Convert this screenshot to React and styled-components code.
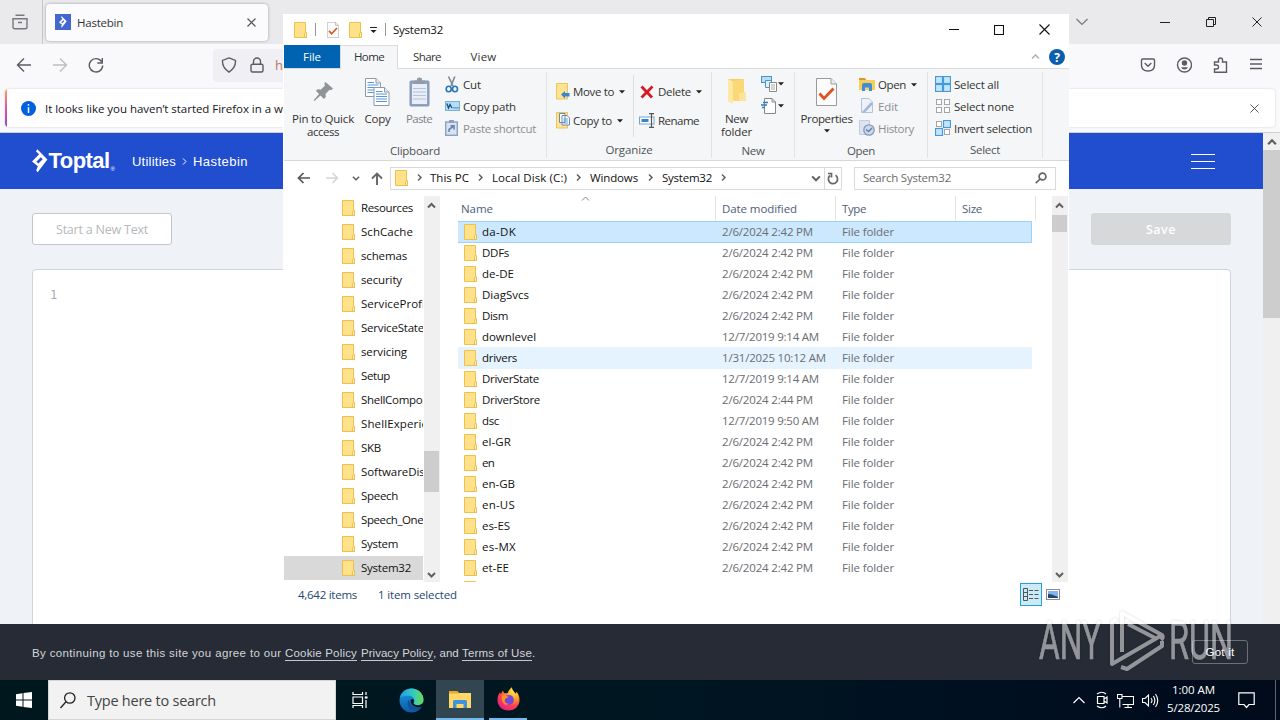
import React, { useLayoutEffect, useRef } from "react";
import styled, { createGlobalStyle, css } from "styled-components";

const GlobalStyle = createGlobalStyle`
  * { box-sizing: border-box; }
  body { margin: 0; overflow: hidden; font-family: "Open Sans", "Noto Sans", sans-serif; font-size: 11.5px; color: #111; }
  svg { display: block; flex: none; }
`;

const TextBox = styled.span`
  display: block;
  flex: none;
  width: ${(p) => p.$w}px;
  white-space: pre;
  overflow: visible;
`;

/* Tracks a label so that it fills exactly the given width. */
function Label({ w, children, className }) {
  const ref = useRef(null);
  useLayoutEffect(() => {
    const el = ref.current;
    el.style.letterSpacing = "0px";
    const natural = el.getBoundingClientRect().width;
    el.style.letterSpacing = `${(w - natural) / el.textContent.length}px`;
  }, [w, children]);
  return (
    <TextBox $w={w} className={className}>
      <span ref={ref}>{children}</span>
    </TextBox>
  );
}

const RaisedLabel = styled(Label)`padding-bottom: 2px;`;

const Desktop = styled.div`
  position: relative;
  width: 1280px;
  height: 720px;
  overflow: hidden;
  display: flex;
  flex-direction: column;
  background: #fff;
`;

/* ---------- icons ---------- */

const FolderIcon = ({ w = 13, h = 16 }) => (
  <svg width={w} height={h} viewBox="0 0 13 16">
    <path d="M.5 .5H11.500V10.500H12.500V15.500H.5Z" fill="#ffe086" stroke="#eec04d" />
    <path d="M1 1H11V15H1Z" fill="#ffe189" />
    <path d="M10.500 15.500V11.500q1-1.500 2 0V15.500Z" fill="#fff0b8" stroke="#e5b83c" strokeWidth=".8" />
  </svg>
);

const Stroke = ({ w = 16, h = w, d, c = "#5b5b66", s = 1.4, children }) => (
  <svg width={w} height={h} viewBox={`0 0 ${w} ${h}`} fill="none" stroke={c} strokeWidth={s}>
    {d && <path d={d} />}
    {children}
  </svg>
);

const Chevron = ({ dir = "down", c = "#606060", s = 2, w = 9 }) => {
  const paths = { down: "M1 3L4.500 6.500L8 3", up: "M1 6.500L4.500 3L8 6.500", right: "M3 1.500L6 4.500L3 7.500" };
  return (
    <svg width={w} height={w} viewBox="0 0 9 9" fill="none" stroke={c} strokeWidth={s}>
      <path d={paths[dir]} />
    </svg>
  );
};

const Triangle = () => (
  <svg width="6" height="4" viewBox="0 0 6 4"><path d="M0 .3H6L3 3.500Z" fill="#222" /></svg>
);

const CloseX = ({ size = 10, c = "#333", s = 1.1 }) => (
  <Stroke w={size} c={c} s={s} d={`M.5 .5L${size - 0.5} ${size - 0.5}M${size - 0.5} .5L.5 ${size - 0.5}`} />
);

const PropsDoc = ({ w, h }) => (
  <svg width={w} height={h} viewBox="0 0 21 28">
    <path d="M.5 .5H15L20.500 6V27.500H.5Z" fill="#fcfcfc" stroke="#9b9b9b" />
    <path d="M15 .5V6H20.500" fill="#eee" stroke="#9b9b9b" />
    <path d="M3.500 15.500L8 20.500L17.500 10.500" fill="none" stroke="#e0531f" strokeWidth="2.800" />
  </svg>
);

const PinIcon = () => (
  <svg width="21" height="21" viewBox="0 0 21 21" fill="#8d9599">
    <path d="M12.500 1L20 7.500L18 9.300L16.500 8.800L12.500 13L12.800 16L11 18L7.500 14.500L1.500 20L.7 19.300L6 13L2.800 9.800L4.800 8.200L8 8.600L12 4.500L11.300 2.400Z" />
  </svg>
);

const Page = ({ x, y }) => (
  <g transform={`translate(${x} ${y})`}>
    <path d="M.5 .5H11L15.500 5V18.500H.5Z" fill="#fff" stroke="#8f9aa8" />
    <path d="M11 .5V5H15.500" fill="#e8eef5" stroke="#8f9aa8" />
    <path d="M2.500 4.500H9M2.500 7H13.500M2.500 9.500H13.500M2.500 12H13.500M2.500 14.500H13.500" stroke="#5596dd" />
  </g>
);

const CopyIcon = () => (
  <svg width="25" height="28" viewBox="0 0 25 28"><Page x={0} y={0} /><Page x={8.5} y={9} /></svg>
);

const PasteIcon = () => (
  <svg width="21" height="30" viewBox="0 0 21 30">
    <rect x="1" y="4" width="19" height="25" rx="1" fill="#8da2c4" stroke="#8397b8" />
    <rect x="3" y="7" width="15" height="20" fill="#e9edf7" />
    <path d="M4 11.500H17M4 15H17M4 18.500H17M4 22H17" stroke="#b4c2dc" />
    <path d="M5 3.500H8V1.500Q10.500 -.5 13 1.500V3.500H16V7H5Z" fill="#929ba8" />
  </svg>
);

const CutIcon = () => (
  <svg width="14" height="17" viewBox="0 0 14 17" fill="none">
    <path d="M3.500 .5L8 10M9.800 .5L6 10" stroke="#808a94" strokeWidth="1.600" />
    <ellipse cx="3.700" cy="13" rx="2.500" ry="2.700" stroke="#2476bd" strokeWidth="1.600" />
    <ellipse cx="10" cy="13" rx="2.500" ry="2.700" stroke="#2476bd" strokeWidth="1.600" />
  </svg>
);

const CopyPathIcon = () => (
  <svg width="15" height="10" viewBox="0 0 15 10">
    <rect x=".5" y=".5" width="14" height="9" fill="#b5dcf8" stroke="#79afd6" />
    <path d="M1.800 2.500L3.500 7L5 3.500L7 7M8.500 6.800h1M10.500 6.800h1M12.500 6.800h1" fill="none" stroke="#184e7c" strokeWidth="1.300" />
  </svg>
);

const PasteShortcutIcon = () => (
  <svg width="13" height="16" viewBox="0 0 13 16">
    <rect x=".7" y="2" width="11.600" height="13.300" fill="#d9e2f1" stroke="#8ca0bf" strokeWidth="1.400" />
    <rect x="4" y="0" width="5" height="3" fill="#8ca0bf" />
    <path d="M4 12V9.500L8 6.500M5.500 5.800H9V9.500" fill="none" stroke="#6783b0" strokeWidth="1.600" />
  </svg>
);

const MoveToIcon = () => (
  <svg width="14" height="17" viewBox="0 0 14 17">
    <path d="M.5 .5H11.500V16H.5Z" fill="#ffe391" stroke="#ecc55b" />
    <path d="M5 11.500L9 8V10H13.500V13.500H9V15.500Z" fill="#3b86c8" />
  </svg>
);

const CopyToIcon = () => (
  <svg width="14" height="17" viewBox="0 0 14 17">
    <path d="M.5 .5H11.500V16H.5Z" fill="#ffe391" stroke="#ecc55b" />
    <path d="M3.500 1.500H9V10.500H3.500ZM6 3.500H11L13.500 6V13H6Z" fill="#fff" stroke="#668bb3" />
    <path d="M7.500 7H12M7.500 9H12M7.500 11H12" stroke="#5596dd" strokeWidth=".9" />
  </svg>
);

const RenameIcon = () => (
  <svg width="16" height="15" viewBox="0 0 16 15" fill="none">
    <rect x=".5" y="4" width="14.500" height="7" fill="#fff" stroke="#72a7d4" />
    <rect x="2.500" y="6" width="7" height="3" fill="#3585c7" />
    <path d="M12.500 1V14M10 .7H15M10 14.300H15" stroke="#555" strokeWidth="1.200" />
  </svg>
);

const NewFolderIcon = () => (
  <svg width="19" height="27" viewBox="0 0 19 27">
    <path d="M1 1H17V14H18.500V23H1Z" fill="#f8cf67" />
    <path d="M1 1L6 3.500V26L1 23.500Z" fill="#ffe8a3" />
    <path d="M6 3.500L17 1V14L12 15V23H6Z" fill="#fbd777" />
    <path d="M12 15L18.500 14V23H12Z" fill="#fce49b" />
  </svg>
);

const NewItemIcon = () => (
  <svg width="16" height="16" viewBox="0 0 16 16" fill="#fff">
    <rect x=".5" y=".5" width="10" height="6" fill="#b8dcf5" stroke="#4c95cb" />
    <path d="M4.500 4.500H10.500V11.500H4.500Z" fill="#dff0fb" stroke="#4c95cb" />
    <path d="M8.500 6.500H15.500V15.500H8.500Z" stroke="#888" />
    <path d="M10 9H14M10 11H14M10 13H14" stroke="#aaa" />
  </svg>
);

const EasyAccessIcon = () => (
  <svg width="16" height="16" viewBox="0 0 16 16" fill="#fff">
    <path d="M3.500 .5H11L14.500 4V15.500H3.500Z" stroke="#888" />
    <path d="M11 .5V4H14.500" fill="none" stroke="#888" />
    <path d="M2 4.500H7M0 7H6M1 9.500H4" stroke="#2d7cc0" strokeWidth="1.400" />
  </svg>
);

const OpenIcon = () => (
  <svg width="16" height="15" viewBox="0 0 16 15">
    <path d="M0 1H6L7.500 3H16V13H0Z" fill="#f9cf53" />
    <path d="M0 1H6L7 3H0Z" fill="#d89b29" />
    <path d="M3 14V8Q3 6 5 6H11Q13 6 13 8V14H10V10.500H6V14Z" fill="#3b8dde" />
  </svg>
);

const EditIcon = () => (
  <svg width="16" height="16" viewBox="0 0 16 16" fill="none">
    <path d="M2.500 .5H10L13.500 4V14.500H2.500Z" fill="#edf2fa" stroke="#b3c3dc" />
    <path d="M3 14L12 4L14 6L5.500 15Z" fill="#a4b8d8" />
  </svg>
);

const HistoryIcon = () => (
  <svg width="16" height="16" viewBox="0 0 16 16" fill="none">
    <path d="M.5 .5H10.500V14.500H.5Z" fill="#dde4f0" stroke="#c0cde1" />
    <circle cx="10" cy="10" r="5.200" fill="#ccd8ea" stroke="#8298bc" strokeWidth="1.300" />
    <path d="M7 9.500L9.500 11.500L13 8" stroke="#6480ad" strokeWidth="1.400" />
  </svg>
);

const GridIcon = ({ picked }) => (
  <svg width="16" height="16" viewBox="0 0 16 16">
    {[[0, 0], [8, 0], [0, 8], [8, 8]].map(([x, y], i) => {
      const on = picked[i];
      const inset = on ? 0.5 : 1.5;
      return (
        <rect key={i} x={x + inset} y={y + inset} width={on ? 7 : 5} height={on ? 7 : 5}
          fill={on ? "#c5e5fb" : "#fff"} stroke={on ? "#439bdd" : "#a6a6a6"} strokeWidth={on ? 1.2 : 1} />
      );
    })}
  </svg>
);

const ToptalMark = ({ size = 24 }) => (
  <svg width={size * 0.65} height={size} viewBox="0 0 16 24">
    <path fillRule="evenodd" fill="#fff" d="M5.500 0L15.800 10.500L5.800 23.500L4.300 21.800L6 17.500L0 12.500L7.300 5.200L4 2ZM9 8.200L4.500 12.700L6.500 14.500L11 10.300Z" />
  </svg>
);

/* ---------- browser ---------- */

const Browser = styled.main`
  height: 680px;
  display: flex;
  flex-direction: column;
  background: #f9f9fb;
`;

const TabStrip = styled.header`
  height: 44px;
  display: flex;
  align-items: center;
  background: #eaeaed;
  color: #333;
`;

const ArchiveCell = styled.div`
  width: 43px;
  height: 44px;
  padding-left: 12px;
  display: flex;
  align-items: center;
  border-right: 1px solid #c5c5ca;
`;

const Tab = styled.div`
  width: 222px;
  height: 37px;
  margin: 0 0 0 3px;
  padding: 0 12px 0 9px;
  display: flex;
  align-items: center;
  gap: 6px;
  border-radius: 4px;
  background: #fbfbfd;
  box-shadow: 0 0 3px #999;
`;

const Favicon = styled.i`
  width: 16px;
  height: 16px;
  display: grid;
  place-items: center;
  background: #4466cf;
`;

const Spring = styled.div`flex: 1;`;

const WindowButtons = styled.div`
  display: flex;
  align-items: center;
  padding-right: 18px;
  gap: 36px;
`;

const Toolbar = styled.nav`
  height: 42px;
  display: flex;
  align-items: center;
  padding: 0 16px;
`;

const NavButtons = styled.div`
  width: 197px;
  display: flex;
  gap: 20px;
`;

const UrlField = styled.div`
  width: 800px;
  height: 33px;
  padding-left: 8px;
  display: flex;
  align-items: center;
  gap: 12px;
  border-radius: 4px;
  background: #f0f0f4;
  color: #b07b67;
  font-size: 13px;
`;

const Address = styled.span`margin-left: -2px;`;

const ToolIcons = styled.div`
  display: flex;
  gap: 20px;
`;

const Notice = styled.div`
  height: 38px;
  margin: 3px 5px 5px;
  padding: 0 16px 0 0;
  display: flex;
  align-items: center;
  border-radius: 4px;
  background: #fff;
  box-shadow: 0 0 2px #c9c9cd;
  overflow: hidden;
  color: #15141a;
`;

const NoticeAccent = styled.i`
  width: 2px;
  height: 38px;
  margin-right: 14px;
  background: linear-gradient(#ffa15e, #d457a5 50%, #8f4ad6);
`;

const InfoDot = styled.i`
  width: 15px;
  height: 15px;
  margin-right: 9px;
  display: grid;
  place-items: center;
  border-radius: 50%;
  background: #0061e0;
`;

const Viewport = styled.div`
  height: 492px;
  display: flex;
  border-top: 1px solid #cfcfd3;
`;

const PageBody = styled.section`
  width: 1263px;
  background: #eff2f6;
  overflow: hidden;
`;

const PageHeader = styled.header`
  height: 56px;
  padding: 0 48px 0 32px;
  display: flex;
  align-items: center;
  background: #204ecf;
  color: #fff;
  font-family: "Liberation Sans", sans-serif;
  font-size: 13px;
`;

const Brand = styled.div`
  display: flex;
  align-items: center;
  width: 100px;
  gap: 1px;
  font: 700 22px "Liberation Sans", sans-serif;
  sup { font-size: 6px; font-weight: 400; align-self: flex-end; line-height: 10px; }
`;

const Crumb = styled.div`
  display: flex;
  align-items: center;
  gap: 4px;
`;

const Burger = styled.div`
  width: 24px;
  height: 15px;
  border: solid #fff;
  border-width: 1px 0;
  display: flex;
  align-items: center;
  &::after { content: ""; width: 100%; height: 1px; background: #fff; }
`;

const PageActions = styled.div`
  padding: 24px 32px;
  display: flex;
  justify-content: space-between;
`;

const PageButton = styled.div`
  width: 140px;
  height: 32px;
  display: grid;
  place-items: center;
  border-radius: 3px;
  font: 12.5px "Open Sans", sans-serif;
  ${(p) => p.$solid
    ? css`background: #d6d8da; color: #fff; font-weight: 600; `
    : css`background: #fff; border: 1px solid #c4c6c9; color: #b6b8bb;`}
`;

const Editor = styled.div`
  width: 1199px;
  height: 360px;
  margin-left: 32px;
  padding: 17px;
  border: 1px solid #ced4dc;
  border-radius: 4px;
  background: #fff;
  color: #aaa;
  font: 12px/17px "DejaVu Sans Mono", monospace;
`;

const Bar = styled.div`
  width: ${(p) => p.$w ?? 16}px;
  height: 100%;
  margin-left: ${(p) => p.$gap ?? 0}px;
  flex: none;
  background: #f0f0f0;
  display: flex;
  flex-direction: column;
  align-items: flex-start;
`;

const BarArrow = styled.div`
  width: ${(p) => p.$w ?? 15}px;
  height: ${(p) => p.$h ?? 18}px;
  display: grid;
  place-items: center;
`;

const Thumb = styled.div`
  width: ${(p) => p.$w ?? 15}px;
  height: ${(p) => p.$h}px;
  margin-top: ${(p) => p.$gap ?? 0}px;
  background: #cdcdcd;
`;

const CookieBar = styled.footer`
  height: 56px;
  padding: 2px 32px 0;
  display: flex;
  align-items: center;
  background: #262b35;
  color: #d3d5d9;
  font: 11.5px "Liberation Sans", sans-serif;
  line-height: 14px;
`;

const CookieLink = styled(Label)`
  border-bottom: 1px solid #c5c7cc;
  margin-top: 1px;
`;

const GotIt = styled.div`
  width: 56px;
  height: 24px;
  margin-top: -2px;
  display: grid;
  place-items: center;
  border: 1px solid #6b6f77;
  border-radius: 3px;
  color: #fff;
`;

function BrowserWindow() {
  return (
    <Browser>
      <TabStrip>
        <ArchiveCell>
          <Stroke d="M3.500 1.200H12.500M1 4.700H15V13Q15 14.800 13.200 14.800H2.800Q1 14.800 1 13ZM6 8.500H10" c="#77777f" />
        </ArchiveCell>
        <Tab>
          <Favicon><ToptalMark size={12} /></Favicon>
          <Label w={46}>Hastebin</Label>
          <Spring />
          <CloseX size={9} c="#555" />
        </Tab>
        <Spring />
        <WindowButtons>
          <Stroke w={12} h={8} c="#777" s={1.2} d="M.5 1L6 6.500L11.500 1" />
          <Spring />
          <Stroke w={10} c="#222" s={1} d="M0 5.500H10" />
          <Stroke w={10} c="#222" s={1} d="M.5 2.500H7.500V9.500H.5ZM2.500 2.500V.5H9.500V7.500H7.500" />
          <CloseX size={10} c="#222" s={1} />
        </WindowButtons>
      </TabStrip>
      <Toolbar>
        <NavButtons>
          <Stroke d="M15 8H1.500M8 1.500L1.500 8L8 14.500" />
          <Stroke c="#bcbcc2" d="M1 8H14.500M8 1.500L14.500 8L8 14.500" />
          <Stroke d="M13.500 4.500A6.700 6.700 0 1 0 14.700 8.500M14.300 1V6H9.300" />
        </NavButtons>
        <UrlField>
          <Stroke d="M8 .9L14.500 3.400Q15 10.500 8 15.200Q1 10.500 1.500 3.400Z" />
          <Stroke d="M3.500 7.200H12.500Q14 7.200 14 8.700V13.500Q14 15 12.500 15H3.500Q2 15 2 13.500V8.700Q2 7.200 3.500 7.200ZM4.500 7V4.500a3.500 3.500 0 0 1 7 0V7" />
          <Address>hastebin.com</Address>
        </UrlField>
        <Spring />
        <ToolIcons>
          <Stroke d="M2.800 2H13.200Q14.500 2 14.500 3.300V8Q14.500 14 8 14Q1.500 14 1.500 8V3.300Q1.500 2 2.800 2ZM4.700 6L8 9.200L11.300 6" />
          <Stroke>
            <circle cx="8.500" cy="8" r="7" />
            <circle cx="8.500" cy="6" r="2" fill="#5b5b66" />
            <path d="M5 10.200H12Q11 12.500 8.500 12.500Q6 12.500 5 10.200Z" fill="#5b5b66" stroke="none" />
          </Stroke>
          <Stroke d="M2.500 5H6.500V3a2 2 0 0 1 4 0V5H14.500V15.200H2.500V12H4.500a2 2 0 0 0 0-4H2.500Z" />
          <Stroke d="M2 2.500H14M2 7H14M2 11.500H14" />
        </ToolIcons>
      </Toolbar>
      <Notice>
        <NoticeAccent />
        <InfoDot><Stroke w={3} h={9} c="#fff" s={1.5} d="M1.500 0V1.800M1.500 3.300V9" /></InfoDot>
        <Label w={260}>It looks like you haven’t started Firefox in a while.</Label>
        <Spring />
        <CloseX size={9} c="#555" s={1} />
      </Notice>
      <Viewport>
        <PageBody>
          <PageHeader>
            <Brand><ToptalMark /><Label w={61}>Toptal</Label><sup>®</sup></Brand>
            <Crumb>
              <Label w={44}>Utilities</Label>
              <Chevron dir="right" c="#fff" s={1} w={9} />
              <Label w={55}>Hastebin</Label>
            </Crumb>
            <Spring />
            <Burger />
          </PageHeader>
          <PageActions>
            <PageButton><Label w={92}>Start a New Text</Label></PageButton>
            <PageButton $solid><Label w={30}>Save</Label></PageButton>
          </PageActions>
          <Editor>1</Editor>
        </PageBody>
        <Bar $w={17}>
          <BarArrow $h={17} $w={17}><Chevron dir="up" w={10} /></BarArrow>
          <Thumb $h={168} $w={17} />
        </Bar>
      </Viewport>
      <CookieBar>
        <Label w={253}>By continuing to use this site you agree to our </Label>
        <CookieLink w={72}>Cookie Policy</CookieLink>
        <Label w={4}> </Label>
        <CookieLink w={72}>Privacy Policy</CookieLink>
        <Label w={29}>, and </Label>
        <CookieLink w={70}>Terms of Use</CookieLink>
        <span>.</span>
        <Spring />
        <GotIt><Label w={29}>Got it</Label></GotIt>
      </CookieBar>
    </Browser>
  );
}

/* ---------- file explorer ---------- */

const Window = styled.section`
  position: absolute;
  left: 283px;
  top: 14px;
  width: 786px;
  height: 610px;
  padding-left: 1px;
  display: flex;
  flex-direction: column;
  background: #fff;
`;

const TitleBar = styled.header`
  height: 31px;
  padding: 0 19px 0 10px;
  display: flex;
  align-items: center;
`;

const QuickItem = styled.div`
  width: ${(p) => p.$w}px;
  display: flex;
  flex: none;
`;

const ArrowBox = styled(QuickItem)`padding: 1px 0 0 5px;`;

const CaptionButtons = styled.div`
  display: flex;
  align-items: center;
  gap: 35px;
`;

const RibbonTabs = styled.nav`
  height: 24px;
  padding-right: 4px;
  display: flex;
  align-items: stretch;
  border-bottom: 1px solid #dadbdc;
  color: #333;
  & > svg { align-self: center; }
`;

const RibbonTab = styled.div`
  width: ${(p) => p.$w}px;
  display: flex;
  align-items: center;
  justify-content: center;
  ${(p) => p.$file && css`background: #0063b1; color: #fff;`}
  ${(p) => p.$active && css`background: #f5f6f7; border: 1px solid #dadbdc; border-bottom: 0; margin-bottom: -1px; padding-bottom: 2px;`}
`;

const Help = styled.i`
  width: 16px;
  height: 16px;
  margin-left: 9px;
  align-self: center;
  display: grid;
  place-items: center;
  border-radius: 50%;
  background: #0c5fae;
  color: #fff;
  font: 700 12px "Open Sans", sans-serif;
`;

const Ribbon = styled.div`
  height: 92px;
  display: flex;
  padding: 3px 0 2px;
  background: #f5f6f7;
  border-bottom: 1px solid #d6d8da;
`;

const Group = styled.section`
  width: ${(p) => p.$w}px;
  display: flex;
  flex-direction: column;
  align-items: center;
  border-right: 1px solid #e1e3e5;
  color: #333;
`;

const GroupBody = styled.div`
  width: 100%;
  height: 70px;
  padding-left: ${(p) => p.$pad ?? 0}px;
  display: flex;
`;

const GroupName = styled(Label)`
  color: #4e5358;
  line-height: 17px;
`;

const BigButton = styled.div`
  width: ${(p) => p.$w}px;
  height: 70px;
  display: flex;
  flex-direction: column;
  align-items: center;
  line-height: 13px;
  color: ${(p) => (p.$off ? "#808488" : "#333")};
`;

const IconSlot = styled.div`
  height: 40px;
  padding-bottom: 1px;
  display: flex;
  align-items: center;
`;

const ArrowSlot = styled.div`padding-top: 4px;`;

const CommandList = styled.div`
  width: ${(p) => p.$w}px;
  height: ${(p) => (p.$two ? 66 : 67)}px;
  padding: ${(p) => (p.$two ? "5px 0 3px" : "1px 0 0")};
  display: flex;
  flex-direction: column;
  justify-content: space-around;
`;

const Command = styled.div`
  height: ${(p) => p.$h ?? 22}px;
  display: flex;
  align-items: center;
  color: ${(p) => (p.$off ? "#8a8e92" : "#333")};
`;

const CommandIcon = styled.div`
  width: ${(p) => p.$w}px;
  display: flex;
  flex: none;
`;

const Rule = styled.i`
  width: 1px;
  height: 62px;
  margin: 3px 5px 0 0;
  background: #dcdee0;
`;

const Cmd = ({ icon, text, w, slot = 18, off, arrow, h }) => (
  <Command $off={off} $h={h}>
    <CommandIcon $w={slot}>{icon}</CommandIcon>
    {text && <Label w={w}>{text}</Label>}
    {arrow && (text ? <ArrowBox $w={arrow + 5}><Triangle /></ArrowBox> : <QuickItem $w={arrow}><Triangle /></QuickItem>)}
  </Command>
);

const Indent = styled.div`padding-left: ${(p) => p.$by}px;`;

const AddressRow = styled.div`
  height: 35px;
  padding: 0 13px 1px 13px;
  display: flex;
  align-items: center;
`;

const Path = styled.div`
  width: 452px;
  height: 23px;
  display: flex;
  align-items: center;
  padding-left: 4px;
  border: 1px solid #d9d9d9;
  color: #111;
`;

const Sep = styled.div`
  width: ${(p) => p.$w ?? 23}px;
  padding-bottom: 1px;
  display: grid;
  place-items: center;
`;

const Refresh = styled.div`
  width: 17px;
  height: 21px;
  margin-left: 3px;
  display: grid;
  place-items: center;
  border-left: 1px solid #d9d9d9;
`;

const SearchBox = styled.div`
  width: 202px;
  height: 23px;
  margin-left: 12px;
  padding: 0 8px;
  display: flex;
  align-items: center;
  justify-content: space-between;
  border: 1px solid #d9d9d9;
  color: #6b6b6b;
`;

const Panes = styled.div`
  height: 386px;
  display: flex;
`;

const Tree = styled.div`
  width: 139px;
  overflow: hidden;
`;

const TreeItem = styled.div`
  height: 24px;
  padding-left: 58px;
  display: flex;
  align-items: center;
  gap: 6px;
  background: ${(p) => (p.$selected ? "#d9d9d9" : "transparent")};
`;

const Files = styled.div`
  width: 594px;
  margin-left: 18px;
  overflow: hidden;
`;

const Columns = styled.div`
  height: 25px;
  display: flex;
  color: #4c607a;
`;

const Column = styled.div`
  width: ${(p) => p.$w}px;
  padding: 0 0 0 ${(p) => p.$pad ?? 6}px;
  display: flex;
  align-items: center;
  border-right: 1px solid #e5e5e5;
`;

const SortMark = styled.div`
  align-self: flex-start;
  margin: -2px 0 0 88px;
`;

const FileRow = styled.div`
  width: 574px;
  height: 22px;
  margin-bottom: -1px;
  padding-left: 6px;
  display: flex;
  align-items: center;
  color: #6a6d71;
  border: 1px solid transparent;
  border-left-width: 0;
  ${(p) => p.$state === "selected" && css`background: #cce8ff; border-color: #99d1ff;`}
  ${(p) => p.$state === "hover" && css`background: #e5f3ff;`}
`;

const FileName = styled.div`
  width: 258px;
  display: flex;
  align-items: center;
  gap: 5px;
  color: #111;
`;

const DateCell = styled.div`width: 120px;`;

const StatusBar = styled.footer`
  height: 25px;
  padding: 0 9px 0 14px;
  display: flex;
  align-items: center;
  color: #24476f;
`;

const ItemCount = styled(Label)`margin-right: 21px;`;

const ViewToggle = styled.div`
  width: 22px;
  height: 23px;
  margin-right: 4px;
  display: grid;
  place-items: center;
  border: 1px solid #26a0da;
  background: #cbeaf8;
`;

const TREE = [
  ["Resources", 52], ["SchCache", 52], ["schemas", 46], ["security", 41], ["ServiceProfiles", 79], ["ServiceState", 63],
  ["servicing", 46], ["Setup", 29], ["ShellComponents", 90], ["ShellExperiences", 92], ["SKB", 20],
  ["SoftwareDistribution", 110], ["Speech", 37], ["Speech_OneCore", 86], ["System", 37], ["System32", 50],
];

const D24 = ["2/6/2024 2:42 PM", 91];
const FILES = [
  ["da-DK", 34, D24, "selected"], ["DDFs", 27, D24], ["de-DE", 32, D24], ["DiagSvcs", 47, D24], ["Dism", 26, D24],
  ["downlevel", 54, ["12/7/2019 9:14 AM", 97]], ["drivers", 35, ["1/31/2025 10:12 AM", 104], "hover"],
  ["DriverState", 57, ["12/7/2019 9:14 AM", 97]], ["DriverStore", 58, ["2/6/2024 2:44 PM", 91]],
  ["dsc", 17, ["12/7/2019 9:50 AM", 97]], ["el-GR", 29, D24], ["en", 12, D24], ["en-GB", 33, D24], ["en-US", 33, D24],
  ["es-ES", 28, D24], ["es-MX", 34, D24], ["et-EE", 27, D24], ["F12", 18, D24],
];

function Explorer() {
  return (
    <Window>
      <TitleBar>
        <QuickItem $w={21}><FolderIcon w={13} h={16} /></QuickItem>
        <QuickItem $w={12}><Stroke w={1} h={13} c="#999" s={1} d="M.5 0V13" /></QuickItem>
        <QuickItem $w={22}><PropsDoc w={12} h={16} /></QuickItem>
        <QuickItem $w={21}><FolderIcon w={13} h={16} /></QuickItem>
        <QuickItem $w={15}>
          <svg width="7" height="7" viewBox="0 0 7 7"><path d="M0 1H7V2H0ZM.5 4H6.500L3.500 7Z" fill="#222" /></svg>
        </QuickItem>
        <QuickItem $w={8}><Stroke w={1} h={13} c="#999" s={1} d="M.5 0V13" /></QuickItem>
        <Label w={50}>System32</Label>
        <Spring />
        <CaptionButtons>
          <Stroke w={11} c="#111" s={1} d="M1 5.500H11" />
          <Stroke w={10} c="#111" s={1.1} d="M.5 .5H9.500V9.500H.5Z" />
          <CloseX size={11} c="#111" />
        </CaptionButtons>
      </TitleBar>
      <RibbonTabs>
        <RibbonTab $w={56} $file><Label w={18}>File</Label></RibbonTab>
        <RibbonTab $w={58} $active><Label w={30}>Home</Label></RibbonTab>
        <RibbonTab $w={58}><Label w={28}>Share</Label></RibbonTab>
        <RibbonTab $w={55}><Label w={26}>View</Label></RibbonTab>
        <Spring />
        <Chevron dir="up" c="#aaa" s={1.3} />
        <Help>?</Help>
      </RibbonTabs>
      <Ribbon>
        <Group $w={263}>
          <GroupBody>
            <BigButton $w={78}>
              <IconSlot><PinIcon /></IconSlot>
              <Label w={62}>Pin to Quick</Label>
              <Label w={32}>access</Label>
            </BigButton>
            <BigButton $w={31}><IconSlot><CopyIcon /></IconSlot><Label w={26}>Copy</Label></BigButton>
            <BigButton $w={52} $off><IconSlot><PasteIcon /></IconSlot><Label w={26}>Paste</Label></BigButton>
            <CommandList $w={100}>
              <Cmd icon={<CutIcon />} text="Cut" w={18} slot={18} />
              <Cmd icon={<CopyPathIcon />} text="Copy path" w={53} slot={18} />
              <Cmd icon={<PasteShortcutIcon />} text="Paste shortcut" w={73} slot={18} off />
            </CommandList>
          </GroupBody>
          <GroupName w={50}>Clipboard</GroupName>
        </Group>
        <Group $w={165}>
          <GroupBody $pad={9}>
            <CommandList $w={77} $two>
              <Cmd icon={<MoveToIcon />} text="Move to" w={41} slot={17} arrow={8} h={29} />
              <Cmd icon={<CopyToIcon />} text="Copy to" w={39} slot={17} arrow={8} h={29} />
            </CommandList>
            <Rule />
            <CommandList $w={70} $two>
              <Cmd
                icon={<Indent $by={1}><Stroke w={14} h={14} c="#d71920" s={2.8} d="M1.500 1.500L12 12.500M12.500 1.500L1.500 12.500" /></Indent>}
                text="Delete" w={33} slot={19} arrow={8} h={29}
              />
              <Cmd icon={<RenameIcon />} text="Rename" w={41} slot={19} h={29} />
            </CommandList>
          </GroupBody>
          <GroupName w={47}>Organize</GroupName>
        </Group>
        <Group $w={83}>
          <GroupBody $pad={9}>
            <BigButton $w={31}>
              <IconSlot><NewFolderIcon /></IconSlot>
              <Label w={23}>New</Label>
              <Label w={31}>folder</Label>
            </BigButton>
            <CommandList $w={40}>
              <Cmd icon={<Indent $by={9}><NewItemIcon /></Indent>} slot={26} arrow={8} />
              <Cmd icon={<Indent $by={9}><EasyAccessIcon /></Indent>} slot={26} arrow={8} />
              <Cmd icon={null} />
            </CommandList>
          </GroupBody>
          <GroupName w={23}>New</GroupName>
        </Group>
        <Group $w={133}>
          <GroupBody $pad={5}>
            <BigButton $w={53}>
              <IconSlot><PropsDoc w={21} h={28} /></IconSlot>
              <Label w={52}>Properties</Label>
              <ArrowSlot><Triangle /></ArrowSlot>
            </BigButton>
            <CommandList $w={70}>
              <Cmd icon={<Indent $by={6}><OpenIcon /></Indent>} text="Open" w={28} slot={25} arrow={8} />
              <Cmd icon={<Indent $by={6}><EditIcon /></Indent>} text="Edit" w={20} slot={25} off />
              <Cmd icon={<Indent $by={6}><HistoryIcon /></Indent>} text="History" w={36} slot={25} off />
            </CommandList>
          </GroupBody>
          <GroupName w={28}>Open</GroupName>
        </Group>
        <Group $w={115}>
          <GroupBody $pad={7}>
            <CommandList $w={100}>
              <Cmd icon={<GridIcon picked={[1, 1, 1, 1]} />} text="Select all" w={45} slot={19} />
              <Cmd icon={<GridIcon picked={[0, 0, 0, 0]} />} text="Select none" w={60} slot={19} />
              <Cmd icon={<GridIcon picked={[0, 1, 1, 0]} />} text="Invert selection" w={78} slot={19} />
            </CommandList>
          </GroupBody>
          <GroupName w={30}>Select</GroupName>
        </Group>
      </Ribbon>
      <AddressRow>
        <QuickItem $w={29}><Stroke w={13} h={12} c="#555" s={1.7} d="M13 6H1.500M6.500 1L1.500 6L6.500 11" /></QuickItem>
        <QuickItem $w={26}><Stroke w={13} h={12} c="#d4d4d4" s={1.5} d="M0 6H11.500M6.500 1L11.500 6L6.500 11" /></QuickItem>
        <QuickItem $w={19}><Chevron w={8} s={1.7} /></QuickItem>
        <QuickItem $w={19}><Stroke w={12} h={13} c="#666" s={1.9} d="M6 13V1.500M1 6.500L6 1.500L11 6.500" /></QuickItem>
        <Path>
          <FolderIcon />
          <Sep $w={22}><Chevron dir="right" s={1.5} /></Sep>
          <RaisedLabel w={39}>This PC</RaisedLabel>
          <Sep><Chevron dir="right" s={1.5} /></Sep>
          <RaisedLabel w={75}>Local Disk (C:)</RaisedLabel>
          <Sep><Chevron dir="right" s={1.5} /></Sep>
          <RaisedLabel w={48}>Windows</RaisedLabel>
          <Sep $w={24}><Chevron dir="right" s={1.5} /></Sep>
          <RaisedLabel w={50}>System32</RaisedLabel>
          <Sep><Chevron dir="right" s={1.5} /></Sep>
          <Spring />
          <Chevron w={10} s={1.8} />
          <Refresh><Stroke w={12} h={13} c="#666" s={1.7} d="M3 3.500A4.600 4.600 0 1 0 8.500 3.200M1 1.500H4.500V5.500" /></Refresh>
        </Path>
        <SearchBox>
          <RaisedLabel w={88}>Search System32</RaisedLabel>
          <Stroke w={12} h={12} c="#666" s={1.7}><circle cx="7.500" cy="4.500" r="3.400" /><path d="M5 7L.8 11.200" /></Stroke>
        </SearchBox>
      </AddressRow>
      <Panes>
        <Tree>
          {TREE.map(([name, w], i) => (
            <TreeItem key={name} $selected={i === 15}><FolderIcon /><RaisedLabel w={w}>{name}</RaisedLabel></TreeItem>
          ))}
        </Tree>
        <Bar $w={16} $gap={1}>
          <BarArrow><Chevron dir="up" /></BarArrow>
          <Thumb $h={41} $gap={237} />
          <Spring />
          <BarArrow $h={16}><Chevron /></BarArrow>
        </Bar>
        <Files>
          <Columns>
            <Column $w={258} $pad={3}>
              <Label w={32}>Name</Label>
              <SortMark><Chevron dir="up" c="#888" s={1} /></SortMark>
            </Column>
            <Column $w={120}><Label w={75}>Date modified</Label></Column>
            <Column $w={120}><Label w={24}>Type</Label></Column>
            <Column $w={80}><Label w={20}>Size</Label></Column>
          </Columns>
          {FILES.map(([name, w, [date, dw], state]) => (
            <FileRow key={name} $state={state}>
              <FileName><FolderIcon /><RaisedLabel w={w}>{name}</RaisedLabel></FileName>
              <DateCell><RaisedLabel w={dw}>{date}</RaisedLabel></DateCell>
              <RaisedLabel w={52}>File folder</RaisedLabel>
            </FileRow>
          ))}
        </Files>
        <Bar>
          <BarArrow><Chevron dir="up" /></BarArrow>
          <Thumb $h={17} $gap={1} />
          <Spring />
          <BarArrow $h={16}><Chevron /></BarArrow>
        </Bar>
      </Panes>
      <StatusBar>
        <ItemCount w={59}>4,642 items</ItemCount>
        <Label w={79}>1 item selected</Label>
        <Spring />
        <ViewToggle>
          <Stroke w={16} h={13} c="#555" s={1} d="M.5 .5H4.500V12.500H.5ZM.5 4.500H4.500M.5 8.500H4.500M6 2.500H10M11.500 2.500H15.500M6 6.500H10M11.500 6.500H15.500M6 10.500H10M11.500 10.500H15.500" />
        </ViewToggle>
        <svg width="14" height="11" viewBox="0 0 14 11">
          <rect x=".5" y=".5" width="13" height="10" fill="#fff" stroke="#8a8a94" />
          <rect x="2" y="2" width="10" height="7" fill="#83b5e8" />
          <path d="M2 5L6 5.500L12 8V9H2Z" fill="#22476a" />
        </svg>
      </StatusBar>
    </Window>
  );
}

/* ---------- watermark ---------- */

const Watermark = styled.svg`
  position: absolute;
  left: 1036px;
  top: 606px;
  filter: drop-shadow(0 0 1px rgba(0, 0, 0, 0.35));
`;

const AnyRun = () => (
  <Watermark width="200" height="70" viewBox="0 0 200 70" opacity=".5">
    <g fill="#fff" stroke="#fff" strokeWidth=".7" fontFamily="Roboto, sans-serif" fontWeight="400" fontSize="53">
      <text x="3" y="53" textLength="62" lengthAdjust="spacingAndGlyphs">ANY</text>
      <text x="133" y="53" textLength="64" lengthAdjust="spacingAndGlyphs">RUN</text>
    </g>
    <g fill="none" stroke="#fff" strokeWidth="4" strokeLinejoin="round">
      <path d="M81 13L76 16V58L126 29" />
      <path d="M86 46V7L126 29Q128 31 125 34M126 35V40L91 63L85 61" />
      <path d="M92 18L119 32" />
    </g>
  </Watermark>
);

/* ---------- taskbar ---------- */

const TaskbarRoot = styled.footer`
  height: 40px;
  display: flex;
  align-items: center;
  background: linear-gradient(90deg, #00171e, #001722 50%, #000f20 80%, #000a1b);
  color: #fff;
`;

const TaskButton = styled.div`
  width: 48px;
  height: 40px;
  margin-left: ${(p) => p.$gap ?? 0}px;
  display: grid;
  place-items: center;
  background: ${(p) => (p.$active ? "#314650" : "transparent")};
  border-bottom: ${(p) => (p.$open ? "2px solid #76b9ed" : "0")};
`;

const FirefoxButton = styled(TaskButton)`width: 38px;`;

const TaskSearch = styled.div`
  width: 288px;
  height: 40px;
  padding-left: 11px;
  display: flex;
  align-items: center;
  gap: 11px;
  background: #f2f2f2;
  border: 1px solid #d5d5d5;
  color: #444;
  font-size: 14.5px;
`;

const Tray = styled.div`
  display: flex;
  align-items: center;
  gap: 8px;
`;

const Clock = styled.div`
  width: 53px;
  display: flex;
  flex-direction: column;
  align-items: center;
  line-height: 18px;
  margin-bottom: 3px;
`;

const NotifySlot = styled.div`padding-left: 10px;`;

const ShowDesktop = styled.i`
  width: 5px;
  height: 40px;
  margin-left: 20px;
  border-left: 1px solid #60666f;
`;

const Taskbar = () => (
  <TaskbarRoot>
    <TaskButton>
      <svg width="16" height="16" viewBox="0 0 16 16" fill="#fff">
        <path d="M0 2.200L6.500 1.300V7.500H0ZM7.500 1.100L16 0V7.500H7.500ZM0 8.500H6.500V14.700L0 13.800ZM7.500 8.500H16V16L7.500 14.900Z" />
      </svg>
    </TaskButton>
    <TaskSearch>
      <Stroke w={16} h={17} c="#222" s={1.3}><circle cx="9.800" cy="6" r="5.200" /><path d="M6 9.800L.5 16" /></Stroke>
      <Label w={129}>Type here to search</Label>
    </TaskSearch>
    <TaskButton>
      <Stroke w={16} h={16} c="#fff" s={1.2} d="M1 0V2.500H10.500V0M1 5H10.500V11.500H1ZM1 16V13.500H10.500V16M14 0V3M14 8V16">
        <path d="M12.800 5.500H15.500" strokeWidth="2.200" />
      </Stroke>
    </TaskButton>
    <TaskButton $gap={3}>
      <svg width="25" height="25" viewBox="0 0 24 24">
        <defs>
          <linearGradient id="eg" x1="0" x2="1"><stop offset="0" stopColor="#1d9ee8" /><stop offset=".55" stopColor="#35c9c0" /><stop offset="1" stopColor="#6edb52" /></linearGradient>
          <linearGradient id="eb" x2="0" y2="1"><stop stopColor="#1b9de2" /><stop offset="1" stopColor="#0b59a8" /></linearGradient>
        </defs>
        <circle cx="12" cy="12" r="11.500" fill="url(#eb)" />
        <path d="M1 9.500C2 4 6.500 .5 12 .5C18.500 .5 23.500 5.500 23.500 11C23.500 14.500 21 16.500 17.800 16.500C15.500 16.500 14 15.500 14.200 14.300C15.500 13 15.300 8.500 10 7.500C6 7 2.500 8 1 9.500Z" fill="url(#eg)" />
        <path d="M9.500 11C6.500 14 9 21.500 15 21.500C18 21.500 20.500 20 21.800 18C16 20.200 10 16.500 9.500 11Z" fill="#174f92" />
        <path d="M14.300 13.200C13 15 15 16.500 17.800 16.500C20 16.500 22 15.600 23.200 13.800L24 18L21.800 18C17 20 11 16.500 11 12C12.500 9 15 11 14.300 13.200Z" fill="#00171f" />
      </svg>
    </TaskButton>
    <TaskButton $gap={1} $active $open>
      <svg width="22" height="19" viewBox="0 0 22 19">
        <path d="M0 1H8L10 3H22V18H0Z" fill="#ffd867" />
        <path d="M0 1H8L10 3.500H0Z" fill="#e9a825" />
        <path d="M4 18V11.500Q4 10 5.500 10H16.500Q18 10 18 11.500V18H14.500V14H7.500V18Z" fill="#3f93df" />
      </svg>
    </TaskButton>
    <FirefoxButton $open $gap={5}>
      <svg width="23" height="24" viewBox="0 0 24 25">
        <defs>
          <radialGradient id="ff" cx=".75" cy=".15" r=".95"><stop offset="0" stopColor="#fff04a" /><stop offset=".4" stopColor="#ff9a25" /><stop offset=".7" stopColor="#ff3d4c" /><stop offset="1" stopColor="#e01f8a" /></radialGradient>
        </defs>
        <path d="M12 24.500C5 24.500 .5 19.500 .5 13.500C.5 10 1.800 7 3.200 5.500L4 7.500L6 3.500L7.500 6.500L11 6.500C12 4 13.500 1.500 15.500 .2C15.800 3.500 18 4.500 19.500 7L20.500 5C22.500 7.500 23.500 10.500 23.500 13.500C23.500 19.500 19 24.500 12 24.500Z" fill="url(#ff)" />
        <circle cx="12.300" cy="13.500" r="5.300" fill="#7746df" />
        <path d="M5 9C8 8 10 9 12 10.500C10.500 12 8.500 11.500 8 13.500C7.800 16 10 18 12.500 17.500C9 20.500 4.500 17 5 9Z" fill="#ff9123" />
      </svg>
    </FirefoxButton>
    <Spring />
    <Tray>
      <Stroke w={12} h={8} c="#fff" s={1.2} d="M.5 7L6 1.500L11.500 7" />
      <Stroke w={16} h={18} c="#fff" s={1.2} d="M4.500 5.500H11V12.500H4.500ZM11 8L14 6V12L11 10M4 3Q9 -.5 13 3M4 15Q9 18.500 13 15" />
      <Stroke w={17} h={15} c="#fff" s={1.1} d="M5.500 3.500H16.500V11.500H5.500M11 11.500V14.500M7.500 14.500H15M.5 1.500H5V5.500H.5ZM2.800 5.500V14.500" />
      <Stroke w={17} h={15} c="#fff" s={1.1} d="M.5 5.500H3L6.500 2V13L3 9.500H.5ZM9 5Q11 7.500 9 10M11.300 3Q14.500 7.500 11.300 12M13.500 1Q18 7.500 13.500 14" />
      <Clock><Label w={43}>1:00 AM</Label><Label w={53}>5/28/2025</Label></Clock>
      <NotifySlot><Stroke w={17} h={17} c="#fff" s={1.2} d="M.8 .8H16.200V12.500H11L8.500 15.500L6 12.500H.8Z" /></NotifySlot>
    </Tray>
    <ShowDesktop />
  </TaskbarRoot>
);

export default function App() {
  return (
    <Desktop>
      <GlobalStyle />
      <BrowserWindow />
      <Taskbar />
      <Explorer />
      <AnyRun />
    </Desktop>
  );
}
